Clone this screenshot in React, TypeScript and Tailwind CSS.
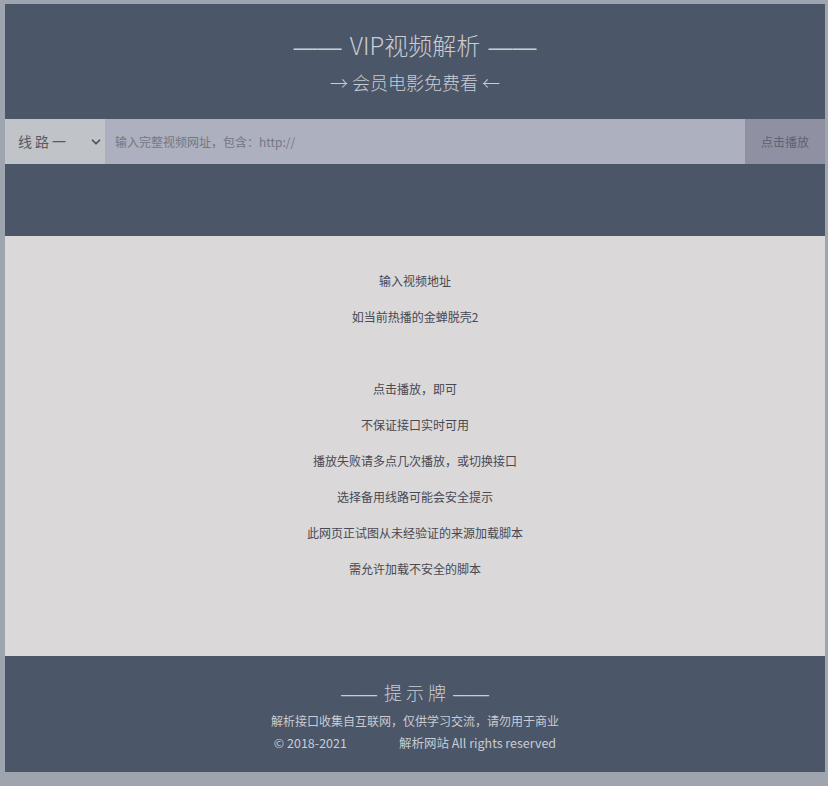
import { ChevronDown } from 'lucide-react';

const tips = [
  '输入视频地址',
  '如当前热播的金蝉脱壳2',
  '',
  '点击播放，即可',
  '不保证接口实时可用',
  '播放失败请多点几次播放，或切换接口',
  '选择备用线路可能会安全提示',
  '此网页正试图从未经验证的来源加载脚本',
  '需允许加载不安全的脚本',
];

const dash = 'font-["Liberation_Sans"] font-normal mx-[3px]';

export default function App() {
  return (
    <div
      className="min-h-[786px] w-full bg-[#9fa5ae] pt-[4px] pb-[14px] pl-[5px] pr-[3px]"
      style={{ fontFamily: '"Noto Sans CJK SC", "Noto Sans", sans-serif' }}
    >
      <div className="w-full">
        <header className="bg-[#4b5668] h-[232px] flex flex-col">
          <div className="flex flex-col items-center pt-[25px] h-[115px]">
            <h1 className="text-[24px] leading-[32px] font-light text-[#c9ccd3]">
              <span className={dash}>——</span> VIP视频解析 <span className={dash}>——</span>
            </h1>
            <p className="text-[18px] leading-[26px] font-light text-[#c9ccd3] mt-[6px]">→ 会员电影免费看 ←</p>
          </div>
          <div className="flex h-[45px]">
            <div className="w-[100px] bg-[#c0c3c8] flex items-center justify-between pl-[13px] pr-[2px] text-[14px] text-[#555a63]">
              <span className="tracking-[3px]">线路一</span>
              <ChevronDown size={14} strokeWidth={3} className="text-[#4b5060]" />
            </div>
            <div className="flex-1 bg-[#adb0be] flex items-center pl-[10px] text-[12px] text-[#747783]">
              输入完整视频网址，包含：http://
            </div>
            <button className="w-[80px] bg-[#8f91a3] text-[12px] text-[#5e6272] flex items-center justify-center">
              点击播放
            </button>
          </div>
        </header>
        <main className="bg-[#dad8d9] h-[420px] flex flex-col items-center pt-[34px]">
          {tips.map((t, i) => (
            <p key={i} className="h-[36px] leading-[22px] text-[12px] text-[#474953]">
              {t}
            </p>
          ))}
        </main>
        <footer className="bg-[#4b5668] h-[116px] flex flex-col items-center pt-[24px] text-[#c9ccd3]">
          <h2 className="text-[18px] leading-[24px] font-light">
            <span className={dash}>——</span> 提 示 牌 <span className={dash}>——</span>
          </h2>
          <p className="text-[12px] leading-[22px] mt-[4px]">解析接口收集自互联网，仅供学习交流，请勿用于商业</p>
          <p className="text-[12.5px] leading-[21px] flex gap-[52px]">
            <span>© 2018-2021</span>
            <span>解析网站 All rights reserved</span>
          </p>
        </footer>
      </div>
    </div>
  );
}
